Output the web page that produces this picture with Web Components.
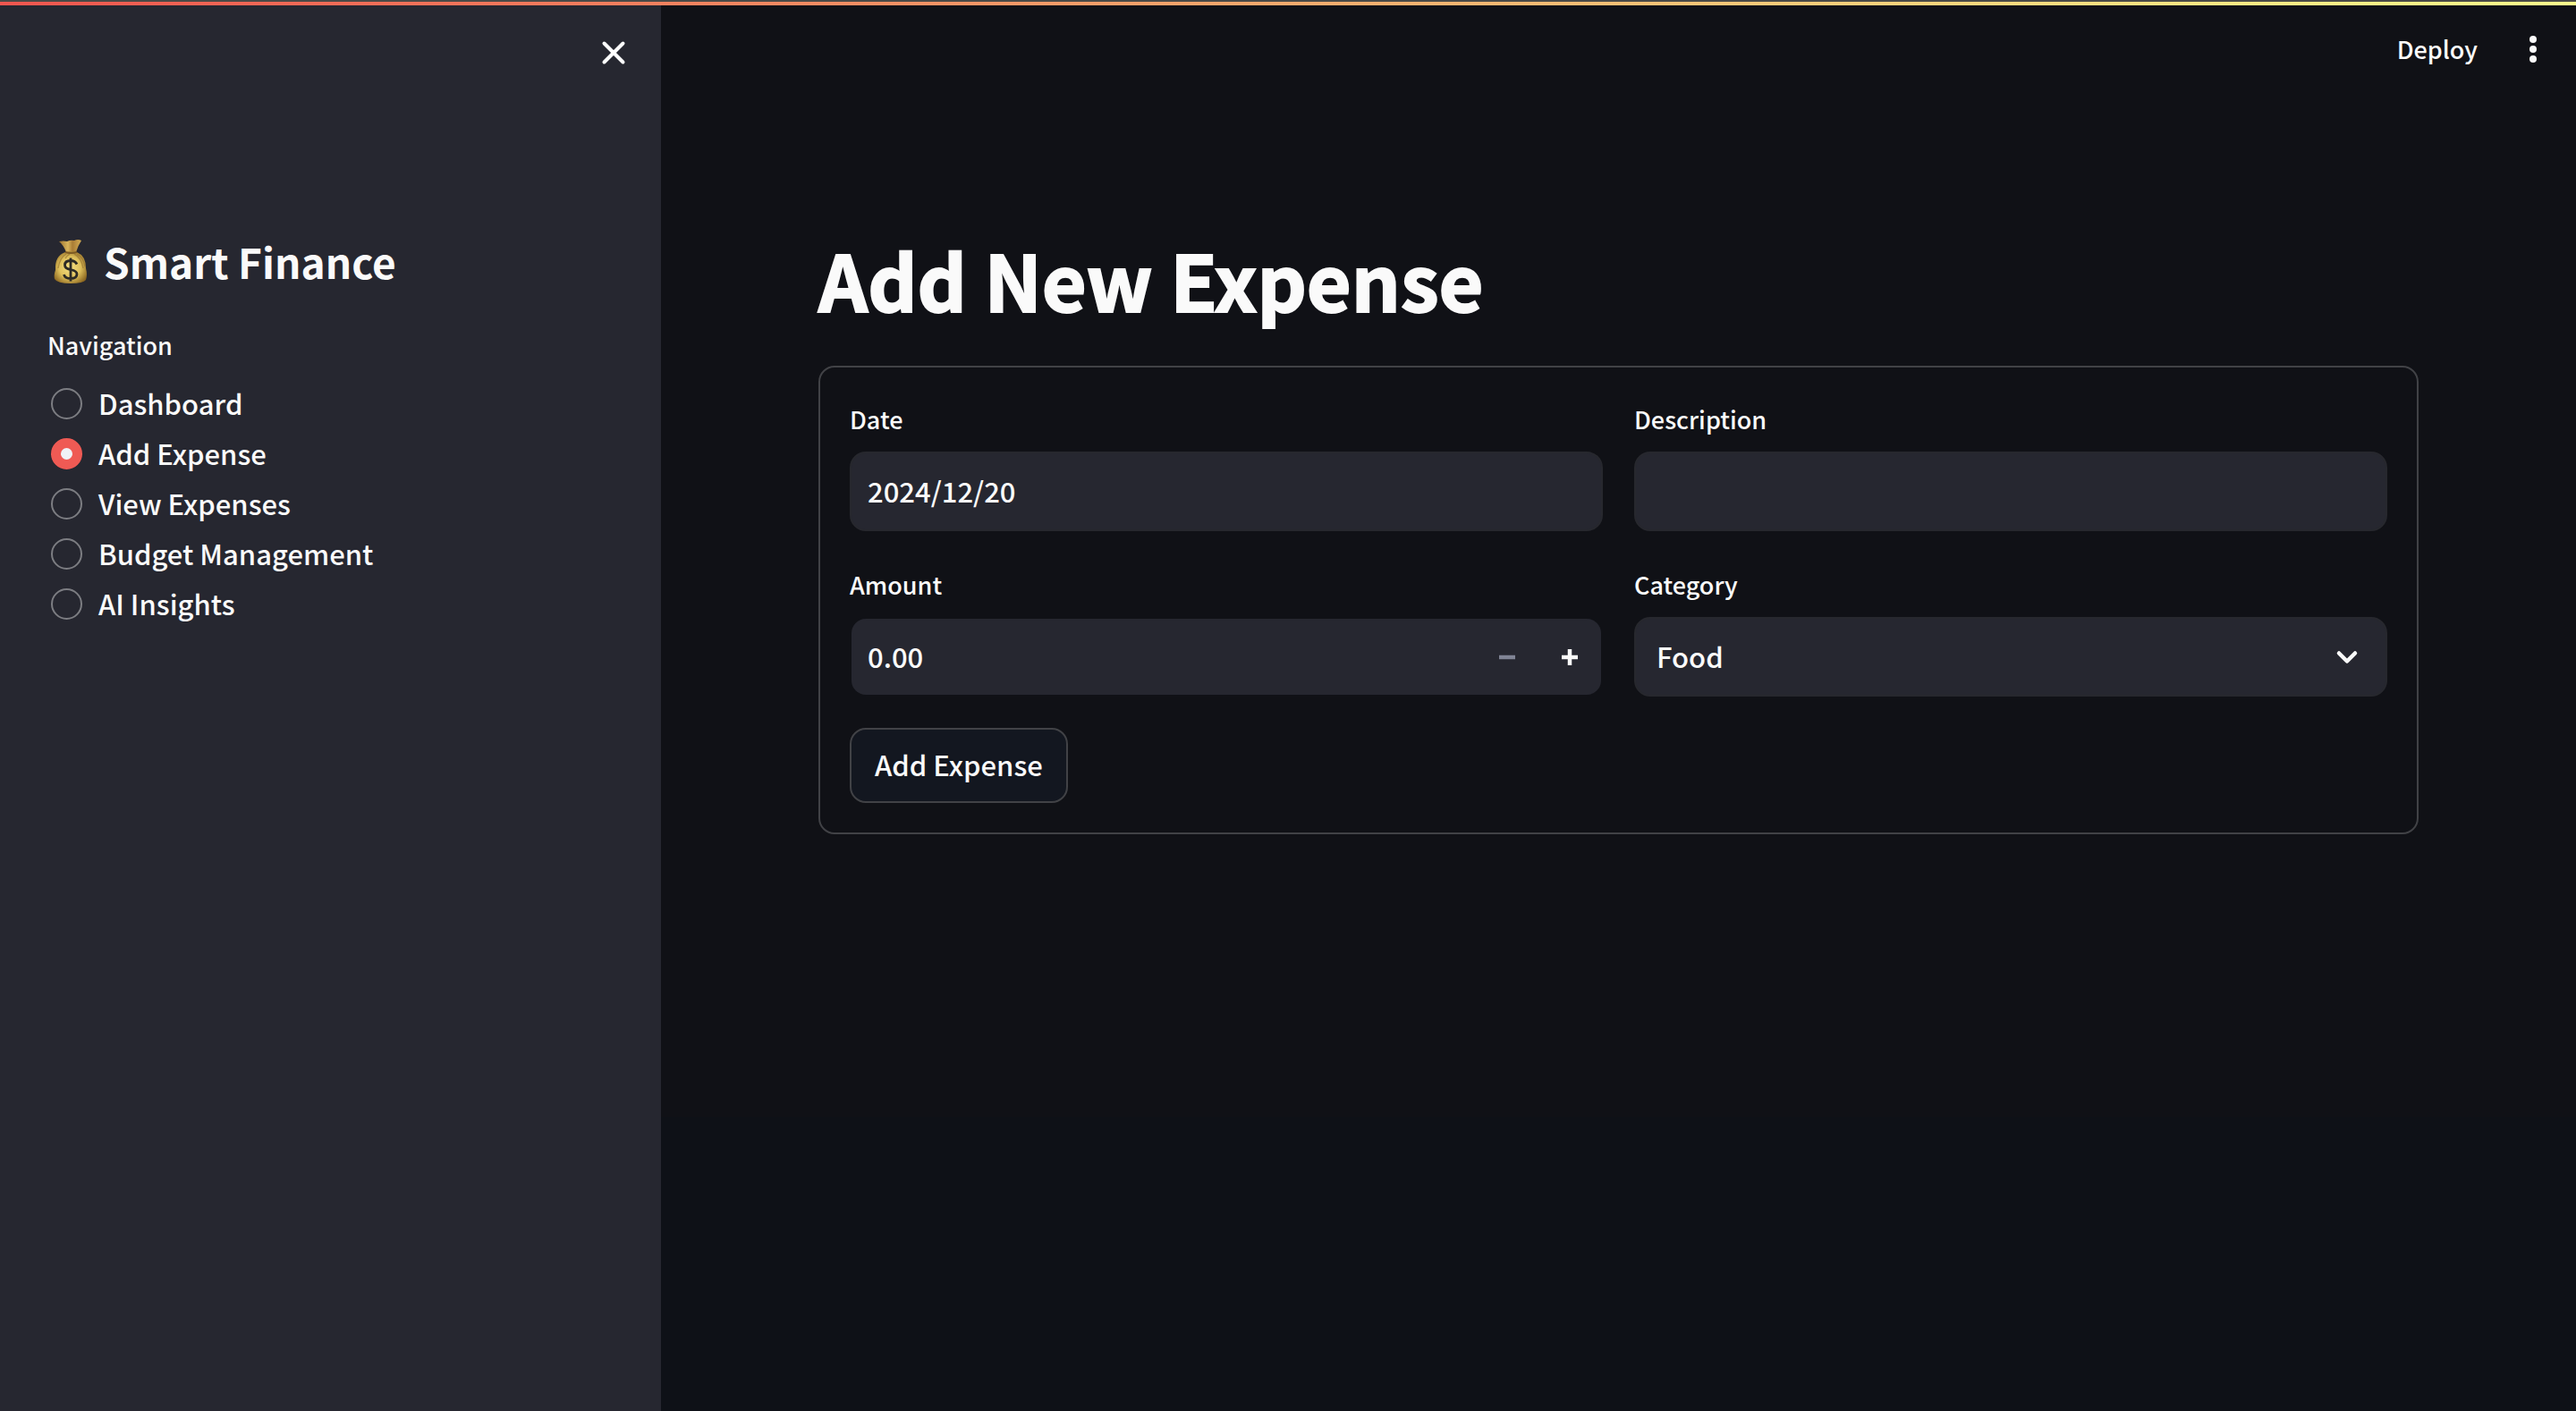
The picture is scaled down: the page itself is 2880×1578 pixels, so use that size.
<!DOCTYPE html>
<html lang="en">
<head>
<meta charset="utf-8">
<title>Smart Finance</title>
<style>
  html, body { height: 100%; }
  body {
    margin: 0;
    background: #0e1117;
    color: #fafafa;
    font-family: "Noto Sans CJK SC", "Noto Sans", sans-serif;
    font-size: 31px;
    font-weight: 500;
    --panel: #262730;
    --panel-edge: #27282e;
    --line: #414246;
    --accent: #ef5a54;
    --small: 27px;
    --radius: 18px;
  }
</style>
</head>
<body>
<finance-app>
  <side-bar slot="sidebar" heading="Smart Finance">
    <nav-radio label="Navigation" selected="Add Expense"
      options="Dashboard|Add Expense|View Expenses|Budget Management|AI Insights"></nav-radio>
  </side-bar>
  <app-toolbar slot="toolbar"></app-toolbar>
  <page-title>Add New Expense</page-title>
  <expense-form></expense-form>
</finance-app>

<script>
const define = (name, html, setup) => {
  const template = document.createElement("template");
  template.innerHTML = html;
  customElements.define(name, class extends HTMLElement {
    connectedCallback() {
      if (this.shadowRoot) return;
      const root = this.attachShadow({ mode: "open" });
      root.append(template.content.cloneNode(true));
      if (setup) setup(this, root);
    }
  });
};

/* App frame: decoration strip, sidebar, main column */
define("finance-app", `
<style>
  :host { display: flex; flex-direction: column; min-height: 100vh; }
  .strip { height: 4px; border-top: 2px solid #4a4a47; background: linear-gradient(90deg, #f0564f, #ffff8c); background-clip: padding-box; flex: none; }
  .body { flex: 1; display: flex; }
  main { flex: 1; min-width: 0; background: linear-gradient(#101116 0 1243px, #0e1117 1243px); }
  .content { padding: 148px 176px 0; }
</style>
<div class="strip"></div>
<div class="body">
  <slot name="sidebar"></slot>
  <main><slot name="toolbar"></slot><div class="content"><slot></slot></div></main>
</div>`);

define("side-bar", `
<style>
  :host { display: block; flex: none; width: 739px; background: var(--panel); box-sizing: border-box; }
  header { display: flex; justify-content: flex-end; padding: 30px 30px 0; }
  button { all: unset; width: 46px; height: 46px; cursor: pointer; }
  svg { display: block; }
  .content { padding: 168px 53px 0; }
  h1 { display: flex; align-items: center; gap: 15px; margin: 0 0 32px; font-size: 46px; line-height: 84px; font-weight: 700; }
  h1 svg { margin-left: 6px; }
</style>
<header>
  <button aria-label="Close sidebar"><svg width="46" height="46" viewBox="0 0 46 46"><path d="M12.500 12.500L33.500 33.500M33.500 12.500L12.500 33.500" stroke="#fff" stroke-width="4" stroke-linecap="round"/></svg></button>
</header>
<div class="content">
  <h1>
    <svg width="42" height="52" viewBox="0 0 42 52" aria-hidden="true">
      <defs>
        <radialGradient id="bag" cx=".48" cy=".5" r=".6"><stop offset="0" stop-color="#f5e083"/><stop offset=".55" stop-color="#dfc05b"/><stop offset="1" stop-color="#89641f"/></radialGradient>
        <linearGradient id="neck"><stop offset="0" stop-color="#9b7330"/><stop offset=".4" stop-color="#d9b55b"/><stop offset=".6" stop-color="#a97c35"/><stop offset="1" stop-color="#d4ae55"/></linearGradient>
      </defs>
      <path d="M7 4Q12 3 16 4Q20 2 24 3Q28 1 32 3Q28 9 26 16H15Q12 8 7 4Z" fill="url(#neck)"/>
      <path d="M14 16Q20 14 27 16Q37 20 37 34Q39 42 37 47Q34 51 20 51Q5 51 2 46Q1 42 3 36Q2 20 14 16Z" fill="url(#bag)"/>
      <path d="M15 18Q8 22 6 34M19 18Q16 20 14 23M24 18Q32 22 34 34M27 18Q34 22 36 32" fill="none" stroke="#92702e" stroke-opacity=".6" stroke-width="1.400"/>
      <path d="M14 16Q20 18 27 16" fill="none" stroke="#7d5a23" stroke-width="2"/>
      <path d="M27 29.500Q25 25.500 20 25.500Q13.500 25.500 13.500 30.500Q13.500 34.500 20 35.500Q27 37 27 40.500Q27 45.500 20 45.500Q13.500 45.500 12.500 41M20 22.500V48.500" fill="none" stroke="#2d2b26" stroke-width="2.800"/>
    </svg>
    <span></span>
  </h1>
  <slot></slot>
</div>`, (host, root) => { root.querySelector("h1 span").textContent = host.getAttribute("heading"); });

define("nav-radio", `
<style>
  :host { display: block; }
  fieldset { border: 0; margin: 0; padding: 0; min-width: 0; }
  legend { padding: 0; font-size: var(--small); line-height: 40px; margin-bottom: 19px; }
  .list { display: flex; flex-direction: column; gap: 4px; align-items: flex-start; }
  label { display: flex; align-items: center; gap: 18px; height: 52px; line-height: 52px; padding-left: 4px; cursor: pointer; }
  input { appearance: none; flex: none; box-sizing: border-box; width: 35px; height: 35px; margin: 0; border: 2px solid #7c7d82; border-radius: 50%; }
  input:checked { border: 11px solid var(--accent); background: #f0f2f6; }
</style>
<fieldset><legend></legend><div class="list"></div></fieldset>`, (host, root) => {
  root.querySelector("legend").textContent = host.getAttribute("label");
  for (const text of host.getAttribute("options").split("|")) {
    const label = document.createElement("label");
    const input = document.createElement("input");
    input.type = "radio";
    input.name = "page";
    input.checked = text === host.getAttribute("selected");
    const span = document.createElement("span");
    span.textContent = text;
    label.append(input, span);
    root.querySelector(".list").append(label);
  }
});

define("app-toolbar", `
<style>
  :host { display: flex; justify-content: flex-end; align-items: center; gap: 44px; height: 98px; padding-right: 30px; }
  button { all: unset; font-size: var(--small); line-height: 38px; cursor: pointer; }
  svg { display: block; }
</style>
<button>Deploy</button>
<button aria-label="Main menu"><svg width="36" height="36" viewBox="0 0 36 36" fill="#fafafa"><circle cx="18" cy="7" r="4"/><circle cx="18" cy="18" r="4"/><circle cx="18" cy="29" r="4"/></svg></button>`);

define("page-title", `
<style>
  :host { display: block; }
  h1 { margin: 0; font-size: 86px; line-height: 120px; font-weight: 700; padding-bottom: 37px; -webkit-text-stroke: 2px currentColor; }
</style>
<h1><slot></slot></h1>`);

/* One labelled control; kind is text, number or select */
define("form-field", `
<style>
  :host { display: block; min-width: 0; }
  label { display: block; font-size: var(--small); line-height: 50px; margin-bottom: 11px; }
  .box { display: flex; align-items: center; box-sizing: border-box; height: 89px; border: 2px solid var(--panel-edge); border-radius: var(--radius); background: var(--panel); overflow: hidden; }
  .box.number { border-color: transparent; background-clip: padding-box; }
  input, select { flex: 1; min-width: 0; width: 100%; height: 100%; box-sizing: border-box; margin: 0; border: 0; outline: 0; padding: 0 18px 3px; appearance: none; background: none; color: inherit; font: inherit; }
  select { padding: 0 23px 3px; }
  .box.select { display: grid; }
  .box.select > * { grid-area: 1 / 1; }
  .box.select svg { justify-self: end; margin-right: 25px; pointer-events: none; }
  button { all: unset; width: 70px; height: 100%; display: grid; place-items: center; color: #fafafa; }
  button:disabled { color: #808495; }
</style>
<label for="control"></label><div class="box"></div>`, (host, root) => {
  const kind = host.getAttribute("kind");
  const value = host.getAttribute("value") || "";
  const box = root.querySelector(".box");
  root.querySelector("label").textContent = host.getAttribute("label");
  box.classList.add(kind);
  if (kind === "select") {
    box.innerHTML = `<select id="control"><option>${value}</option></select>
      <svg width="36" height="36" viewBox="0 0 36 36"><path d="M9 13.500L18 22.500L27 13.500" fill="none" stroke="#fafafa" stroke-width="4.500" stroke-linecap="round" stroke-linejoin="round"/></svg>`;
  } else {
    box.innerHTML = `<input id="control" type="text" value="${value}">`;
  }
  if (kind === "number") {
    box.firstChild.inputMode = "decimal";
    box.insertAdjacentHTML("beforeend", `
      <button type="button" aria-label="Decrease" disabled><svg width="18" height="18" viewBox="0 0 18 18"><path d="M0 9H18" stroke="currentColor" stroke-width="4.500"/></svg></button>
      <button type="button" aria-label="Increase"><svg width="18" height="18" viewBox="0 0 18 18"><path d="M0 9H18M9 0V18" stroke="currentColor" stroke-width="4.500"/></svg></button>`);
  }
});

define("expense-form", `
<style>
  :host { display: block; }
  form { display: flex; flex-direction: column; gap: 35px; padding: 33px; border: 2px solid var(--line); border-radius: var(--radius); }
  .grid { display: grid; grid-template-columns: 1fr 1fr; gap: 35px; }
  button { align-self: flex-start; height: 84px; margin: 0; padding: 0 26px 3px; border: 2px solid var(--line); border-radius: var(--radius); background: #131720; color: inherit; font: inherit; cursor: pointer; }
</style>
<form>
  <div class="grid">
    <form-field kind="text" label="Date" value="2024/12/20"></form-field>
    <form-field kind="text" label="Description"></form-field>
    <form-field kind="number" label="Amount" value="0.00"></form-field>
    <form-field kind="select" label="Category" value="Food"></form-field>
  </div>
  <button type="button">Add Expense</button>
</form>`);
</script>
</body>
</html>
